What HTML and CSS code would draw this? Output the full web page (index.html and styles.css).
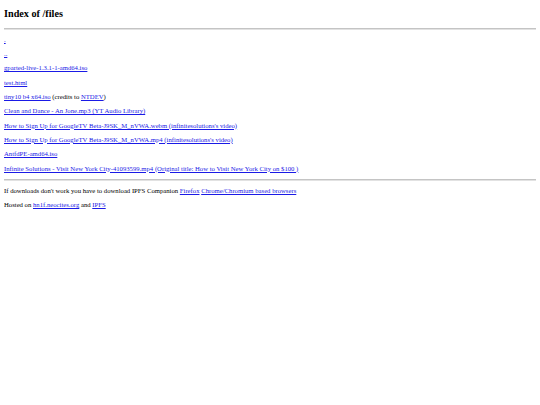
FILE: index.html
```html
<!DOCTYPE html>
<html>
<head>
<meta charset="utf-8">
<title>Index of /files</title>
<link rel="stylesheet" href="styles.css">
</head>
<body class="page">
<h2 class="title">Index of /files</h2>
<hr class="rule">
<p class="entry"><a href="#">.</a></p>
<p class="entry"><a href="#">..</a></p>
<p class="entry"><a href="#">gparted-live-1.3.1-1-amd64.iso</a></p>
<p class="entry"><a href="#">test.html</a></p>
<p class="entry"><a href="#">tiny10 b4 x64.iso</a> (credits to <a href="#">NTDEV</a>)</p>
<p class="entry"><a href="#">Clean and Dance - An Jone.mp3 (YT Audio Library)</a></p>
<p class="entry"><a href="#">How to Sign Up for GoogleTV Beta-J9SK_M_nVWA.webm (infinitesolutions's video)</a></p>
<p class="entry"><a href="#">How to Sign Up for GoogleTV Beta-J9SK_M_nVWA.mp4 (infinitesolutions's video)</a></p>
<p class="entry"><a href="#">AntfdPE-amd64.iso</a></p>
<p class="entry"><a href="#">Infinite Solutions - Visit New York City-41093599.mp4 (Original title: How to Visit New York City on $100 )</a></p>
<hr class="rule rule-bottom">
<p class="entry"><span>If downloads don't work you have to download IPFS Companion</span> <a href="#">Firefox</a> <a href="#">Chrome/Chromium based browsers</a></p>
<p class="entry">Hosted on <a href="#">hn1f.neocites.org</a> and <a href="#">IPFS</a></p>
</body>
</html>
```
FILE: styles.css
```css
.page {
  margin: 3.35px 4px;
  font-family: "Liberation Serif", "Times New Roman", serif;
  font-size: 6.7px;
  line-height: 8px;
  color: #000;
  background: #fff;
}
.title {
  font-size: 10.2px;
  line-height: 12px;
  font-weight: bold;
  margin: 4.2px 0 8px;
}
.rule {
  margin: 3px 0;
  border: none;
  border-top: 1px solid #c4c4c4;
  border-bottom: 1px solid #e2e2e2;
  height: 0;
}
.rule-bottom {
  margin-top: 4px;
}
.entry {
  margin: 6.3px 0;
}
.entry a {
  color: #1a1ae6;
}
```
